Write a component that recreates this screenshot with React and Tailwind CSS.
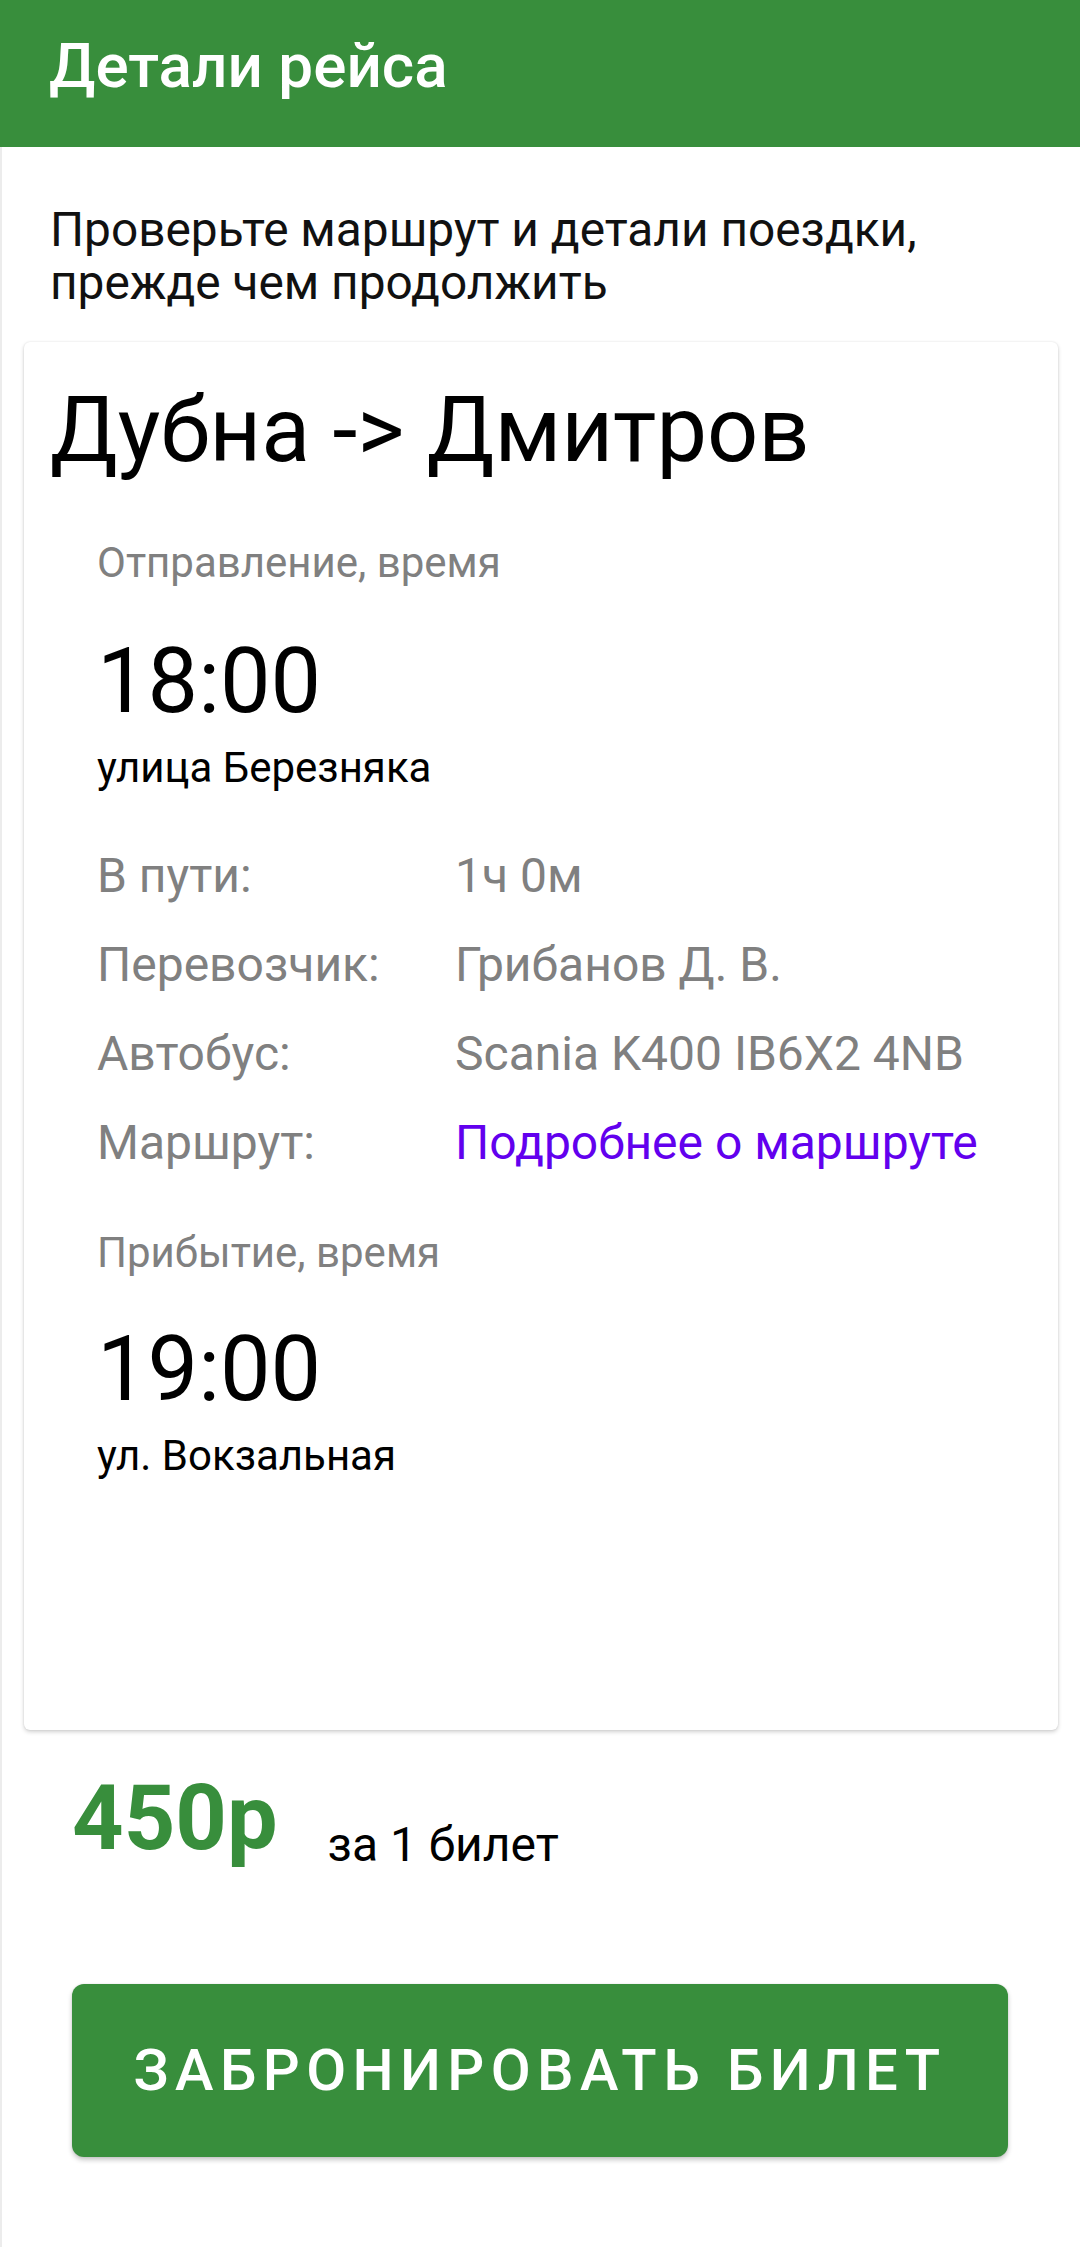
import React from "react";

export default function App() {
  const rows = [
    ["В пути:", "1ч 0м", false],
    ["Перевозчик:", "Грибанов Д. В.", false],
    ["Автобус:", "Scania K400 IB6X2 4NB", false],
    ["Маршрут:", "Подробнее о маршруте", true],
  ];
  return (
    <div className="flex min-h-[2247px] w-[1080px] flex-col bg-white [font-family:Roboto,'Noto_Sans',sans-serif] text-black">
      <header className="h-[147px] shrink-0 bg-[#388E3C] pl-[49px] pt-[35px]">
        <h1 className="text-[62px] leading-[62px] font-medium text-white">Детали рейса</h1>
      </header>
      <div className="flex-1 border-l-2 border-[#ececec] pb-[80px]">
        <p className="pl-[48px] pt-[57px] text-[47.8px] leading-[53px] text-[#111]">
          Проверьте маршрут и детали поездки,
          <br />
          прежде чем продолжить
        </p>
        <section className="mx-[22px] mt-[32px] h-[1388px] rounded-[6px] bg-white pl-[26px] pt-[36px] shadow-[0_2px_4px_rgba(0,0,0,0.18),0_0_2px_rgba(0,0,0,0.1)]">
          <h2 className="text-[90px] leading-[106px] text-black">Дубна -&gt; Дмитров</h2>
          <div className="pl-[47px]">
            <div className="mt-[55px] text-[42px] leading-[48px] text-[#808080]">Отправление, время</div>
            <div className="mt-[42px] text-[90px] leading-[106px] text-black">18:00</div>
            <div className="mt-[8px] text-[42px] leading-[50px] text-black">улица Березняка</div>
            <div className="mt-[38px] grid grid-cols-[358px_1fr]">
              {rows.map(([label, value, link]) => (
                <React.Fragment key={label}>
                  <div className="text-[48px] leading-[89px] text-[#808080]">{label}</div>
                  <div className={"text-[48px] leading-[89px] " + (link ? "text-[#6200EE]" : "text-[#808080]")}>{value}</div>
                </React.Fragment>
              ))}
            </div>
            <div className="mt-[42px] text-[42px] leading-[48px] text-[#808080]">Прибытие, время</div>
            <div className="mt-[40px] text-[90px] leading-[106px] text-black">19:00</div>
            <div className="mt-[8px] text-[42px] leading-[50px] text-black">ул. Вокзальная</div>
          </div>
        </section>
        <div className="mt-[36px] flex pl-[70px]">
          <div className="text-[90px] leading-[106px] font-bold text-[#388E3C]">450р</div>
          <div className="ml-[50px] mt-[51px] text-[48px] leading-[56px] text-black">за 1 билет</div>
        </div>
        <button className="ml-[70px] mt-[111px] flex h-[173px] w-[936px] items-center justify-center rounded-[12px] bg-[#388E3C] text-[58px] font-medium tracking-[0.11em] text-white shadow-[0_3px_5px_rgba(0,0,0,0.22),0_0_2px_rgba(0,0,0,0.1)]">
          ЗАБРОНИРОВАТЬ БИЛЕТ
        </button>
      </div>
    </div>
  );
}
